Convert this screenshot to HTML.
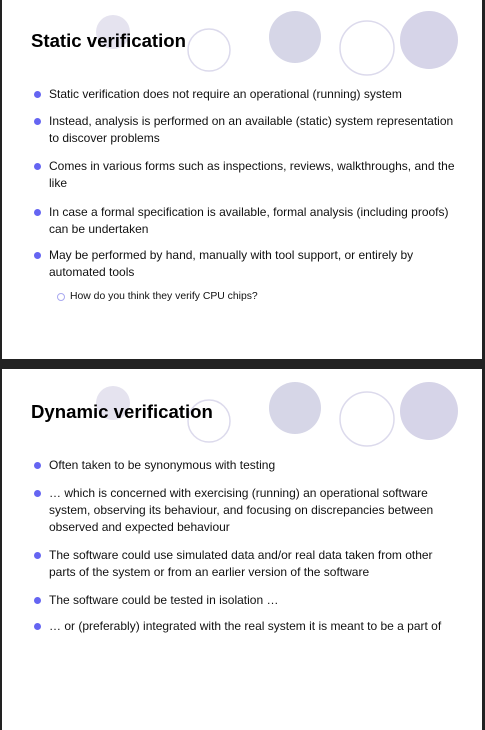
<!DOCTYPE html>
<html><head><style>
body{margin:0;width:485px;height:730px;background:#222;position:relative;overflow:hidden;font-family:"Liberation Sans",Arial,sans-serif;}
.s{position:absolute;left:2px;width:480px;background:#fff;overflow:hidden}
.t{position:absolute;left:29px;font-weight:bold;font-size:18.6px;color:#000}
.b{position:absolute;left:47px;width:410px;font-size:12px;line-height:17px;color:#111}
.b:before{content:"";position:absolute;left:-15px;top:5px;width:7px;height:7px;border-radius:50%;background:#6565f2}
.sub{position:absolute;left:68px;font-size:10.4px;color:#111;line-height:14px}
.sub:before{content:"";position:absolute;left:-13px;top:3px;width:6px;height:6px;border-radius:50%;border:1px solid #a9a9f0}
svg{position:absolute;left:0;top:0}
</style></head><body>
<div class="s" style="top:0;height:359px">
<svg width="480" height="359"><circle cx="111" cy="32" r="17" fill="#e5e3ef"/><circle cx="207" cy="50" r="21" fill="none" stroke="#dcdaec" stroke-width="1.5"/><circle cx="293" cy="37" r="26" fill="#d6d6e7"/><circle cx="365" cy="48" r="27" fill="none" stroke="#dcdaec" stroke-width="1.5"/><circle cx="427" cy="40" r="29" fill="#d6d4e8"/></svg>
<div class="t" style="top:30px">Static verification</div>
<div class="b" style="top:86px">Static verification does not require an operational (running) system</div>
<div class="b" style="top:113px">Instead, analysis is performed on an available (static) system representation to discover problems</div>
<div class="b" style="top:158px">Comes in various forms such as inspections, reviews, walkthroughs, and the like</div>
<div class="b" style="top:204px">In case a formal specification is available, formal analysis (including proofs) can be undertaken</div>
<div class="b" style="top:247px">May be performed by hand, manually with tool support, or entirely by automated tools</div>
<div class="sub" style="top:290px">How do you think they verify CPU chips?</div>
</div>
<div class="s" style="top:369px;height:361px">
<svg width="480" height="361"><circle cx="111" cy="34" r="17" fill="#e5e3ef"/><circle cx="207" cy="52" r="21" fill="none" stroke="#dcdaec" stroke-width="1.5"/><circle cx="293" cy="39" r="26" fill="#d6d6e7"/><circle cx="365" cy="50" r="27" fill="none" stroke="#dcdaec" stroke-width="1.5"/><circle cx="427" cy="42" r="29" fill="#d6d4e8"/></svg>
<div class="t" style="top:32px">Dynamic verification</div>
<div class="b" style="top:88px">Often taken to be synonymous with testing</div>
<div class="b" style="top:116px">… which is concerned with exercising (running) an operational software system, observing its behaviour, and focusing on discrepancies between observed and expected behaviour</div>
<div class="b" style="top:178px">The software could use simulated data and/or real data taken from other parts of the system or from an earlier version of the software</div>
<div class="b" style="top:223px">The software could be tested in isolation …</div>
<div class="b" style="top:249px">… or (preferably) integrated with the real system it is meant to be a part of</div>
</div>
</body></html>
